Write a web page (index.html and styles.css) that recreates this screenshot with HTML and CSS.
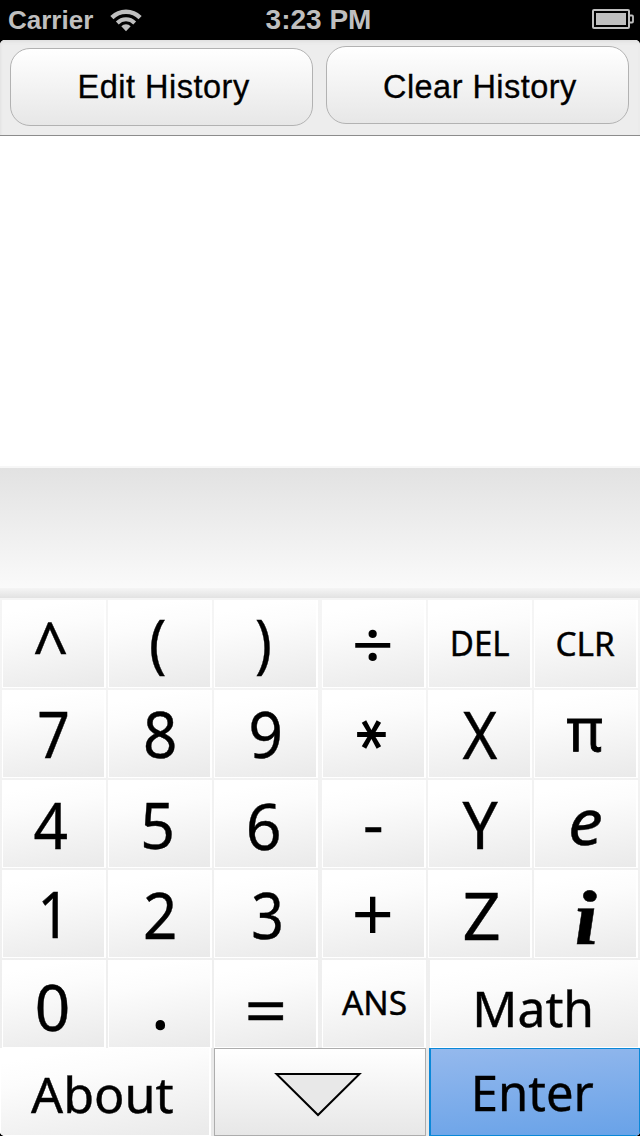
FILE: index.html
```
<!DOCTYPE html>
<html lang="en">
<head>
<meta charset="utf-8">
<title>Calculator</title>
<link rel="stylesheet" href="styles.css">
</head>
<body>
<div class="phone">
  <header class="status">
    <div class="network">
      <span class="carrier">Carrier</span>
      <svg class="wifi" width="32" height="24" viewBox="0 0 32 24">
        <path d="M1.9 9.6A19.8 19.8 0 0 1 30.1 9.6" fill="none" stroke="#bfbfbf" stroke-width="4.4"/>
        <path d="M7.3 15A12.2 12.2 0 0 1 24.7 15" fill="none" stroke="#bfbfbf" stroke-width="4"/>
        <path d="M16 23.2L11.3 18.2A6.7 6.7 0 0 1 20.7 18.2Z" fill="#bfbfbf"/>
      </svg>
    </div>
    <span class="time">3:23 PM</span>
    <svg class="battery" width="43" height="20" viewBox="0 0 43 20">
      <rect x="1" y="1" width="36" height="18" rx="1" fill="none" stroke="#bfbfbf" stroke-width="2"/>
      <rect x="4" y="4" width="30" height="12" fill="#bfbfbf"/>
      <path d="M38 6.5H40Q41 6.5 41 7.5V12.5Q41 13.5 40 13.5H38" fill="none" stroke="#bfbfbf" stroke-width="1.8"/>
    </svg>
  </header>
  <main class="app">
    <nav class="toolbar">
      <button class="tool edit"><span class="tool-label edit-label">Edit History</span></button>
      <button class="tool clear"><span class="tool-label clear-label">Clear History</span></button>
    </nav>
    <section class="history"></section>
    <section class="entry"></section>
    <section class="keypad">
      <button class="key"><span class="label k-caret">^</span></button>
      <button class="key"><span class="label k-open">(</span></button>
      <button class="key"><span class="label k-close">)</span></button>
      <button class="key"><span class="label k-divide">÷</span></button>
      <button class="key"><span class="label k-del">DEL</span></button>
      <button class="key"><span class="label k-clr">CLR</span></button>
      <button class="key"><span class="label k-7">7</span></button>
      <button class="key"><span class="label k-8">8</span></button>
      <button class="key"><span class="label k-9">9</span></button>
      <button class="key"><span class="label k-times">*</span></button>
      <button class="key"><span class="label k-x">X</span></button>
      <button class="key"><span class="label k-pi">π</span></button>
      <button class="key"><span class="label k-4">4</span></button>
      <button class="key"><span class="label k-5">5</span></button>
      <button class="key"><span class="label k-6">6</span></button>
      <button class="key"><span class="label k-minus">-</span></button>
      <button class="key"><span class="label k-y">Y</span></button>
      <button class="key"><span class="label k-e">e</span></button>
      <button class="key"><span class="label k-1">1</span></button>
      <button class="key"><span class="label k-2">2</span></button>
      <button class="key"><span class="label k-3">3</span></button>
      <button class="key"><span class="label k-plus">+</span></button>
      <button class="key"><span class="label k-z">Z</span></button>
      <button class="key"><span class="label k-i">i</span></button>
      <button class="key"><span class="label k-0">0</span></button>
      <button class="key"><span class="label k-dot">.</span></button>
      <button class="key"><span class="label k-equals">=</span></button>
      <button class="key"><span class="label k-ans">ANS</span></button>
      <button class="key math"><span class="label k-math">Math</span></button>
    </section>
    <footer class="actions">
      <button class="key about"><span class="label k-about">About</span></button>
      <button class="key hide">
        <svg width="88" height="46" viewBox="0 0 88 46">
          <path d="M2.5 2H85.5L44 43Z" fill="#e8e8e8" stroke="#000" stroke-width="2"/>
        </svg>
      </button>
      <button class="key enter"><span class="label k-enter">Enter</span></button>
    </footer>
  </main>
</div>
</body>
</html>
```
FILE: styles.css
```
* { box-sizing: border-box; }

body {
  margin: 0;
  background: #000;
}

button {
  margin: 0;
  padding: 0;
  border: 0;
  color: #000;
  text-align: left;
}

.phone {
  width: 640px;
  height: 1136px;
  display: flex;
  flex-direction: column;
  overflow: hidden;
}

/* Status bar */
.status {
  height: 40px;
  display: grid;
  grid-template-columns: 265.6px 1fr 48px;
  color: #bfbfbf;
  font: bold 28px/1 "Liberation Sans", Arial, sans-serif;
}

.network { display: flex; }

.carrier {
  width: 102px;
  padding-left: 8px;
  font-size: 26px;
  line-height: 26px;
  margin-top: 7px;
}

.wifi { margin: 8px 0 0 8px; }

.time {
  font-size: 28px;
  line-height: 28px;
  margin-top: 6px;
}

.battery { margin-top: 9px; }

/* App surface */
.app {
  flex: 1;
  display: flex;
  flex-direction: column;
  border-radius: 5px;
  overflow: hidden;
  background: #f4f4f4;
}

.toolbar {
  height: 96px;
  display: flex;
  gap: 13px;
  padding: 6px 10px 0;
  background: #ededed;
  border-bottom: 1px solid #8c8c8c;
  box-shadow: inset 0 3px 4px -2px #dadada, inset 2px 0 3px -2px #dadada;
}

.tool {
  width: 303px;
  height: 78px;
  display: flex;
  align-items: flex-start;
  border: 1px solid #b2b2b2;
  border-radius: 20px;
  background: linear-gradient(#fff, #e7e7e7);
}

.edit {
  margin-top: 2px;
  padding: 22px 0 0 66.5px;
}

.clear { padding: 24px 0 0 56px; }

.tool-label {
  font: 32.5px/32px "Liberation Sans", Arial, sans-serif;
  letter-spacing: .45px;
  white-space: nowrap;
  -webkit-text-stroke: .3px #000;
}

.edit-label { letter-spacing: .5px; }

.history {
  height: 330px;
  background: #fff;
}

.entry {
  height: 132px;
  border-top: 2px solid #f7f7f7;
  background:
    linear-gradient(#f5f5f5, #e2e2e2) bottom / 100% 10px no-repeat,
    linear-gradient(#e2e2e2, #fafafa 120px);
}

/* Keypad */
.keypad {
  height: 450px;
  display: grid;
  grid-template-columns: 104px 104px 106px 104px 104px 104px;
  grid-auto-rows: 88px;
  gap: 2px;
  padding: 2px 0 0 2px;
  background: linear-gradient(#f5f5f5, #eee);
}

.key {
  display: flex;
  align-items: flex-start;
  width: 104px;
  height: 88px;
  background: linear-gradient(170deg, #fff 12%, #fcfcfc 32%, #eaeaea 97%);
  box-shadow: inset -2px -1px #fff, inset 1px 0 #fff;
}

.math {
  grid-column: 5 / 7;
  width: 210px;
  margin-left: 2px;
}

.actions {
  height: 88px;
  display: flex;
  background: #e9e9e9;
}

.about {
  width: 211px;
  margin-right: 3px;
}

.hide {
  width: 212px;
  margin-right: 3px;
  justify-content: center;
  padding: 23px 4px 0 0;
  border: 1px solid #adadad;
  background: linear-gradient(#fff, #e7e7e7);
  box-shadow: none;
}

.enter {
  width: 211px;
  background: linear-gradient(175deg, #95b9ed, #68a2e8);
  box-shadow: inset 2px 0 #0a88d8, inset 0 0 0 1px #0a88d8;
}

/* Key captions: placed on each key from its top left corner */
.label {
  font-family: "Noto Sans", sans-serif;
  font-size: 64px;
  line-height: 1;
  white-space: nowrap;
  transform-origin: 0 0;
  -webkit-text-stroke: .4px #000;
}

.k-caret { font-size: 69.3px; transform: translate(30.5px, 12.3px) scaleX(.909); }
.k-open { font-size: 64.6px; transform: translate(40.9px, 9.1px) scaleX(.898); }
.k-close { font-size: 64.6px; transform: translate(41.1px, 9.1px) scaleX(.867); }
.k-divide { font-size: 67.1px; -webkit-text-stroke: 0; transform: translate(29.5px, 10.3px) scaleX(1.108); }
.k-del { font-size: 34.1px; transform: translate(21.8px, 26.2px) scaleX(.971); }
.k-clr { font-size: 33.3px; transform: translate(21.4px, 26.8px) scaleX(1.004); }

.k-7 { transform: translate(35.2px, 11.6px) scaleX(.891); }
.k-8 { font-size: 63.3px; transform: translate(35px, 12px) scaleX(.95); }
.k-9 { font-size: 63.3px; transform: translate(34.5px, 12px) scaleX(.95); }
.k-times {
  font-family: "DejaVu Sans", sans-serif;
  font-size: 59px;
  -webkit-text-stroke: 1.8px #000;
  transform: translate(35.3px, 25.3px) rotate(90deg);
  transform-origin: 14.8px 19.2px;
}
.k-x { font-size: 66.1px; transform: translate(34.5px, 9.8px) scaleX(.9); }
.k-pi { font-size: 60.5px; -webkit-text-stroke: .9px #000; transform: translate(32.6px, 7.8px) scaleX(.92); }

.k-4 { transform: translate(31.4px, 13.4px) scaleX(.943); }
.k-5 { transform: translate(32.2px, 13.4px) scaleX(.95); }
.k-6 { font-size: 63.3px; transform: translate(31.8px, 13.6px) scaleX(.99); }
.k-minus { font-size: 58.7px; transform: translate(41px, 13px) scaleX(1.091); }
.k-y { font-size: 66.1px; transform: translate(34.5px, 10.3px) scaleX(.942); }
.k-e { font-style: italic; transform: translate(34px, 9px) scaleX(1.09); }

.k-1 { transform: translate(35.6px, 12px) scaleX(.889); }
.k-2 { font-size: 63.3px; transform: translate(35px, 12.6px) scaleX(.95); }
.k-3 { font-size: 63.3px; transform: translate(37.2px, 12.6px) scaleX(.9); }
.k-plus { font-size: 75px; -webkit-text-stroke: 0; transform: translate(29.5px, 5.3px) scaleX(.991); }
.k-z { font-size: 66.1px; transform: translate(34.4px, 10.8px) scaleX(1.012); }
.k-i {
  font: italic bold 77.5px/1 "Liberation Serif", serif;
  transform: translate(37.4px, 9.6px) skewX(3deg) scaleX(1.15);
}

.k-0 { font-size: 63.3px; transform: translate(32.8px, 14.8px) scaleX(.98); }
.k-dot { -webkit-text-stroke: 1.6px #000; transform: translate(43.7px, 13px); }
.k-equals { transform: translate(30.5px, 18.4px) scaleX(1.167); }
.k-ans { font-size: 32.7px; transform: translate(20px, 27.4px) scaleX(1.023); }
.k-math { font-size: 49.3px; transform: translate(42.3px, 23.2px) scaleX(1.01); }

.k-about { font-size: 48.6px; transform: translate(31px, 22.3px) scaleX(1.035); }
.k-enter { font-size: 49.7px; transform: translate(41.8px, 20px) scaleX(.985); }
```
